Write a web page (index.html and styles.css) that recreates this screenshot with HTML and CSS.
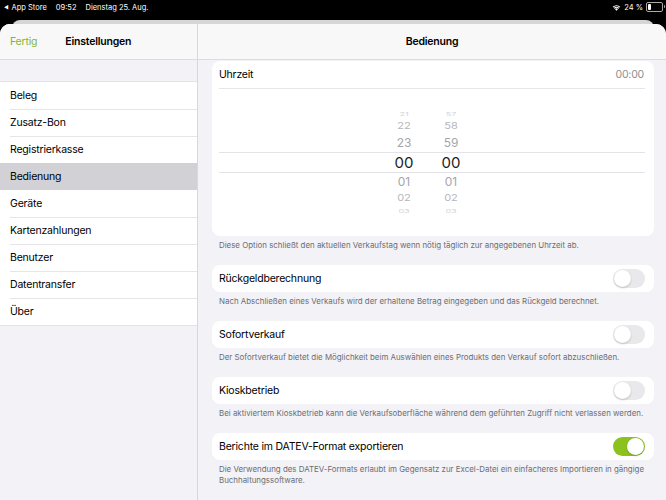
FILE: index.html
```html
<!DOCTYPE html>
<html>
<head>
  <title>Einstellungen</title>
  <link rel="stylesheet" href="styles.css">
</head>
<body>
<div class="statusbar">
  <div class="status-left">
    <span class="back-tri">&#9664;</span><span>App Store</span>
    <span class="status-time">09:52</span>
    <span>Dienstag 25. Aug.</span>
  </div>
  <div class="status-right">
    <svg class="wifi" width="9" height="7" viewBox="0 0 18 13">
      <path d="M9 13 L5.8 9.6 A4.6 4.6 0 0 1 12.2 9.6 Z" fill="#fff"/>
      <path d="M3.6 7.4 A7.8 7.8 0 0 1 14.4 7.4 L13.1 8.8 A5.9 5.9 0 0 0 4.9 8.8 Z" fill="#fff"/>
      <path d="M1.3 5 A11.2 11.2 0 0 1 16.7 5 L15.4 6.4 A9.3 9.3 0 0 0 2.6 6.4 Z" fill="#fff"/>
    </svg>
    <span>24 %</span>
    <span class="battery"><span class="battery-level"></span></span>
  </div>
</div>
<div class="sheet-back"></div>
<div class="sheet">
  <div class="sidebar">
    <div class="navbar">
      <span class="nav-action">Fertig</span>
      <span class="nav-title">Einstellungen</span>
    </div>
    <ul class="menu">
      <li>Beleg</li>
      <li>Zusatz-Bon</li>
      <li>Registrierkasse</li>
      <li class="selected">Bedienung</li>
      <li>Geräte</li>
      <li>Kartenzahlungen</li>
      <li>Benutzer</li>
      <li>Datentransfer</li>
      <li>Über</li>
    </ul>
  </div>
  <div class="detail">
    <div class="navbar center">
      <span class="nav-title">Bedienung</span>
    </div>
    <div class="content">
      <div class="card">
        <div class="row bordered">
          <span>Uhrzeit</span>
          <span class="value">00:00</span>
        </div>
        <div class="picker">
          <div class="picker-part top">
            <div class="wheel-row r3"><span>21</span><span>57</span></div>
            <div class="wheel-row r2"><span>22</span><span>58</span></div>
            <div class="wheel-row r1"><span>23</span><span>59</span></div>
          </div>
          <div class="picker-band">
            <div class="wheel-row r0"><span>00</span><span>00</span></div>
          </div>
          <div class="picker-part bottom">
            <div class="wheel-row r1"><span>01</span><span>01</span></div>
            <div class="wheel-row r2"><span>02</span><span>02</span></div>
            <div class="wheel-row r3"><span>03</span><span>03</span></div>
          </div>
        </div>
      </div>
      <p class="footer">Diese Option schließt den aktuellen Verkaufstag wenn nötig täglich zur angegebenen Uhrzeit ab.</p>

      <div class="card">
        <div class="row">
          <span>Rückgeldberechnung</span>
          <span class="toggle"></span>
        </div>
      </div>
      <p class="footer">Nach Abschließen eines Verkaufs wird der erhaltene Betrag eingegeben und das Rückgeld berechnet.</p>

      <div class="card">
        <div class="row">
          <span>Sofortverkauf</span>
          <span class="toggle"></span>
        </div>
      </div>
      <p class="footer">Der Sofortverkauf bietet die Möglichkeit beim Auswählen eines Produkts den Verkauf sofort abzuschließen.</p>

      <div class="card">
        <div class="row">
          <span>Kioskbetrieb</span>
          <span class="toggle"></span>
        </div>
      </div>
      <p class="footer">Bei aktiviertem Kioskbetrieb kann die Verkaufsoberfläche während dem geführten Zugriff nicht verlassen werden.</p>

      <div class="card">
        <div class="row">
          <span>Berichte im DATEV-Format exportieren</span>
          <span class="toggle on"></span>
        </div>
      </div>
      <p class="footer">Die Verwendung des DATEV-Formats erlaubt im Gegensatz zur Excel-Datei ein einfacheres Importieren in gängige Buchhaltungssoftware.</p>
    </div>
  </div>
</div>
</body>
</html>
```

FILE: styles.css
```css
html, body {
  margin: 0;
  padding: 0;
}

body {
  width: 666px;
  height: 500px;
  overflow: hidden;
  background: #000;
  font-family: "Inter", "Liberation Sans", sans-serif;
  color: #000;
}

.statusbar {
  height: 14px;
  display: flex;
  align-items: center;
  justify-content: space-between;
  padding: 0 3px 0 4px;
  color: #fff;
  font-size: 7.5px;
}

.status-left {
  display: flex;
  align-items: center;
}

.status-left span {
  margin-right: 9px;
}

.status-left .back-tri {
  font-size: 5px;
  margin-right: 3px;
}

.status-right {
  display: flex;
  align-items: center;
  gap: 3px;
}

.battery {
  width: 13px;
  height: 6px;
  border: 1px solid #aaa;
  border-radius: 2px;
  position: relative;
  padding: 1px;
}

.battery::after {
  content: "";
  position: absolute;
  right: -3px;
  top: 2px;
  width: 1.5px;
  height: 3px;
  background: #aaa;
  border-radius: 0 1px 1px 0;
}

.battery-level {
  display: block;
  width: 3px;
  height: 6px;
  background: #fff;
  border-radius: 1px;
}

.sheet-back {
  height: 14px;
  margin: 6px 12px 0;
  background: #d6d6d8;
  border-radius: 8px 8px 0 0;
}

.sheet {
  display: flex;
  height: 476px;
  margin-top: -10px;
  background: #f2f2f7;
  border-radius: 10px 10px 0 0;
  overflow: hidden;
  position: relative;
}

.navbar {
  height: 36px;
  background: #f8f8f8;
  border-bottom: 1px solid #dcdcdf;
  display: flex;
  align-items: center;
  box-sizing: border-box;
  font-size: 10.5px;
  letter-spacing: -0.2px;
}

.navbar.center {
  justify-content: center;
}

.nav-action {
  color: #86b530;
  margin-left: 10px;
  margin-right: 28px;
}

.nav-title {
  font-weight: 600;
}

.sidebar {
  width: 197px;
  border-right: 1px solid #d8d8dc;
  background: #f2f2f7;
  flex-shrink: 0;
}

.menu {
  list-style: none;
  margin: 21px 0 0;
  padding: 0;
  background: #fff;
  border-top: 1px solid #e4e4e8;
  border-bottom: 1px solid #e4e4e8;
}

.menu li {
  height: 27px;
  line-height: 27px;
  padding-left: 10px;
  font-size: 10.5px;
  letter-spacing: -0.2px;
  position: relative;
}

.menu li + li::before {
  content: "";
  position: absolute;
  left: 10px;
  right: 0;
  top: 0;
  border-top: 1px solid #e6e6ea;
}

.menu li.selected {
  background: #d1d1d6;
}

.menu li.selected::before,
.menu li.selected + li::before {
  border-top-color: transparent;
}

.detail {
  flex: 1;
  display: flex;
  flex-direction: column;
}

.content {
  padding: 1px 12px 0 14px;
}

.card {
  background: #fff;
  border-radius: 8px;
  padding: 0 9px 0 7px;
}

.row {
  height: 27px;
  display: flex;
  align-items: center;
  justify-content: space-between;
  font-size: 10.5px;
  letter-spacing: -0.2px;
}

.row.bordered {
  border-bottom: 1px solid #e6e6ea;
}

.value {
  color: #8e8e93;
  margin-right: 1px;
}

.footer {
  margin: 0;
  padding: 4px 0 14px 7px;
  line-height: 11px;
  font-size: 7.9px;
  color: #6d6d72;
  height: 11px;
}

.footer:last-child {
  height: auto;
}

.picker {
  height: 147px;
  display: flex;
  flex-direction: column;
  padding-right: 9px;
}

.picker-part {
  flex: 1;
  display: flex;
  flex-direction: column;
  overflow: hidden;
}

.picker-part.top {
  justify-content: flex-end;
}

.picker-band {
  height: 21px;
  border-top: 1px solid #e4e4e8;
  border-bottom: 1px solid #e4e4e8;
  margin-right: -9px;
  padding-right: 9px;
  box-sizing: border-box;
  display: flex;
  align-items: center;
}

.wheel-row {
  display: flex;
  justify-content: center;
  gap: 7px;
  width: 100%;
}

.wheel-row span {
  width: 40px;
  text-align: center;
}

.wheel-row.r0 {
  font-size: 15px;
  color: #1c1c1e;
}

.wheel-row.r1 {
  height: 18px;
  line-height: 18px;
  font-size: 12px;
  color: #a5a5aa;
}

.wheel-row.r2 {
  height: 15px;
  line-height: 15px;
  font-size: 11px;
  color: #b5b5ba;
  transform: scaleY(0.85);
}

.wheel-row.r3 {
  height: 10px;
  line-height: 10px;
  font-size: 9px;
  color: #d4d4d8;
  transform: scaleY(0.6);
}

.toggle {
  width: 32px;
  height: 19px;
  border-radius: 10px;
  background: #e9e9eb;
  position: relative;
  flex-shrink: 0;
}

.toggle::after {
  content: "";
  position: absolute;
  left: 1px;
  top: 1px;
  width: 17px;
  height: 17px;
  border-radius: 50%;
  background: #fff;
  box-shadow: 0 1px 2px rgba(0, 0, 0, 0.2);
}

.toggle.on {
  background: #8bc220;
}

.toggle.on::after {
  left: 14px;
}
```
